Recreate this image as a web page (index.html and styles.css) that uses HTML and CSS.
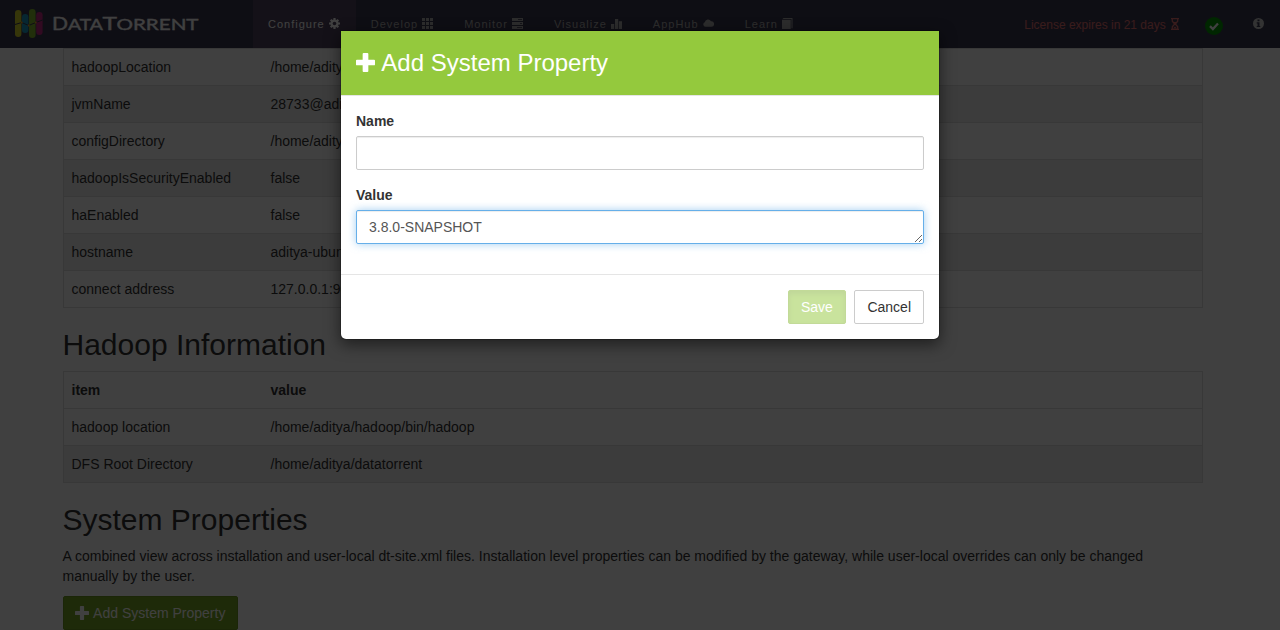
FILE: index.html
```
<!DOCTYPE html>
<html lang="en">
<head>
<meta charset="utf-8">
<title>DataTorrent - System Configuration</title>
<link rel="stylesheet" href="styles.css">
</head>
<body>
<header class="navbar">
  <svg class="logo" width="190" height="34" viewBox="0 0 190 34">
    <rect x="0" y="3" width="6.4" height="27" rx="3.2" fill="#d8d52a"/>
    <rect x="7" y="7" width="6.4" height="19" rx="3.2" fill="#1c9cc4"/>
    <rect x="14" y="2" width="6.6" height="29" rx="3.3" fill="#84ba2c"/>
    <rect x="21.2" y="5" width="6.4" height="23" rx="3.2" fill="#c32a83"/>
    <path d="M0 17.5 6.7 15.5 13.7 18.5 20.8 15.5 27.6 13" fill="none" stroke="#3b3850" stroke-width="1"/>
    <circle cx="6.7" cy="15.5" r="1" fill="#f0a020"/><circle cx="13.7" cy="18.5" r="1" fill="#f0a020"/><circle cx="20.8" cy="15.5" r="1" fill="#f0a020"/>
    <g class="wordmark">
      <text x="37" y="23" font-size="17.5" textLength="16" lengthAdjust="spacingAndGlyphs">D</text>
      <text x="53" y="23" font-size="14.5" textLength="35" lengthAdjust="spacingAndGlyphs">ATA</text>
      <text x="87.500" y="23" font-size="17.5" textLength="14.500" lengthAdjust="spacingAndGlyphs">T</text>
      <text x="101.500" y="23" font-size="14.5" textLength="82" lengthAdjust="spacingAndGlyphs">ORRENT</text>
    </g>
  </svg>
  <nav class="menu">
    <a class="item active">Configure <svg class="icon" viewBox="0 0 11 11"><g stroke="currentColor" stroke-width="2.2"><path d="M5.5 0V11M0 5.5H11M1.7 1.7 9.3 9.3M9.3 1.7 1.7 9.3"/></g><circle cx="5.5" cy="5.5" r="4" fill="currentColor"/><circle class="hole" cx="5.5" cy="5.5" r="1.8"/></svg></a>
    <a class="item">Develop <svg class="icon" viewBox="0 0 11 11"><path fill="currentColor" d="M0 0h3v3H0zM4 0h3v3H4zM8 0h3v3H8zM0 4h3v3H0zM4 4h3v3H4zM8 4h3v3H8zM0 8h3v3H0zM4 8h3v3H4zM8 8h3v3H8z"/></svg></a>
    <a class="item">Monitor <svg class="icon" viewBox="0 0 11 11"><path fill="currentColor" fill-rule="evenodd" d="M0 0h11v3H0zM6 1v.8h4V1zM0 4h11v3H0zM8 5v.8h2V5zM0 8h11v3H0zM5 9v.8h5V9z"/></svg></a>
    <a class="item">Visualize <svg class="icon" viewBox="0 0 11 11"><path fill="currentColor" d="M0 6h3.200v5H0zM4 1h3.200v10H4zM7.900 3.300H11V11H7.900z"/></svg></a>
    <a class="item">AppHub <svg class="icon" viewBox="0 0 11 11"><path fill="currentColor" d="M2.400 8.800A2.400 2.400 0 0 1 1.800 4.200 3.300 3.300 0 0 1 8 3.200 2.800 2.800 0 0 1 8.500 8.800z"/></svg></a>
    <a class="item">Learn <svg class="icon" viewBox="0 0 11 11"><path fill="currentColor" d="M1.500 0H10.500v10.200h-1V1H.5zM0 1.700h8.700V11H0z"/></svg></a>
  </nav>
  <div class="status">
    <span class="license">License expires in 21 days <svg width="8" height="12" viewBox="0 0 8 12"><path fill="none" stroke="currentColor" stroke-width="1.300" d="M0 .7h8M0 11.300h8M1.300 1v2.200L3.700 6 1.300 8.800V11M6.700 1v2.200L4.300 6l2.400 2.800V11"/><path fill="currentColor" d="M2 4h4L4 6zM2 10.500 4 8.500l2 2z"/></svg></span>
    <svg class="health" width="18" height="18" viewBox="0 0 18 18"><circle cx="9" cy="9" r="9" fill="#009600"/><path d="M5 9.200 7.900 12 13 6.500" fill="none" stroke="#fff" stroke-width="2.300"/></svg>
    <svg class="info" width="11" height="11" viewBox="0 0 11 11"><circle cx="5.500" cy="5.500" r="5.500" fill="currentColor"/><path fill="#3b3850" d="M4.500 1.500h2v1.700h-2zM3.700 4.200h2.800v3.700h.8v1.200H3.700V7.900h.8V5.400h-.8z"/></svg>
  </div>
</header>

<main class="container">
  <table class="props">
    <tr><td>hadoopLocation</td><td>/home/aditya</td></tr>
    <tr class="odd"><td>jvmName</td><td>28733@aditya</td></tr>
    <tr><td>configDirectory</td><td>/home/aditya</td></tr>
    <tr class="odd"><td>hadoopIsSecurityEnabled</td><td>false</td></tr>
    <tr><td>haEnabled</td><td>false</td></tr>
    <tr class="odd"><td>hostname</td><td>aditya-ubuntu</td></tr>
    <tr><td>connect address</td><td>127.0.0.1:9090</td></tr>
  </table>
  <h2>Hadoop Information</h2>
  <table class="props">
    <tr><th>item</th><th>value</th></tr>
    <tr><td>hadoop location</td><td>/home/aditya/hadoop/bin/hadoop</td></tr>
    <tr class="odd"><td>DFS Root Directory</td><td>/home/aditya/datatorrent</td></tr>
  </table>
  <h2>System Properties</h2>
  <p>A combined view across installation and user-local dt-site.xml files. Installation level properties can be modified by the gateway, while user-local overrides can only be changed manually by the user.</p>
  <button class="btn btn-success add"><svg class="plus" width="14" height="14" viewBox="0 0 20 20"><path d="M7 1q0-1 1-1h4q1 0 1 1v6h6q1 0 1 1v4q0 1-1 1h-6v6q0 1-1 1H8q-1 0-1-1v-6H1q-1 0-1-1V8q0-1 1-1h6z" fill="currentColor"/></svg> Add System Property</button>
</main>

<div class="backdrop"></div>
<div class="overlay">
  <section class="modal">
    <div class="modal-header"><h3><svg class="plus" width="19" height="19" viewBox="0 0 20 20"><path d="M7 1q0-1 1-1h4q1 0 1 1v6h6q1 0 1 1v4q0 1-1 1h-6v6q0 1-1 1H8q-1 0-1-1v-6H1q-1 0-1-1V8q0-1 1-1h6z" fill="currentColor"/></svg> Add System Property</h3></div>
    <div class="modal-body">
      <label for="name">Name</label>
      <input class="field" id="name" type="text">
      <label for="value">Value</label>
      <textarea class="field focused" id="value" rows="1">3.8.0-SNAPSHOT</textarea>
    </div>
    <div class="modal-footer">
      <button class="btn btn-success saving" disabled>Save</button>
      <button class="btn btn-default">Cancel</button>
    </div>
  </section>
</div>
</body>
</html>
```
FILE: styles.css
```
* { box-sizing: border-box; }
html, body { height: 100%; }
body {
  margin: 0;
  overflow: hidden;
  background: #fff;
  color: #333;
  font: 14px/20px "Liberation Sans", Arial, sans-serif;
}
.navbar {
  display: flex;
  height: 48px;
  padding-left: 15px;
  background: #3b3850;
  color: #b0b0b0;
}
.logo { flex: none; margin-top: 7px; }
.wordmark { fill: #fff; stroke: #fff; stroke-width: .35px; font-family: Lato, sans-serif; font-weight: 400; }
.menu { display: flex; margin-left: 48px; }
.item {
  padding: 14px 15px;
  font-size: 11px;
  letter-spacing: 1px;
  white-space: nowrap;
}
.item.active { background: #514660; color: #fff; }
.icon { width: 11px; height: 11px; margin-right: 1px; vertical-align: -1px; }
.hole { fill: #514660; }
.status { display: flex; flex: 1; justify-content: flex-end; padding-right: 16px; }
.license { margin: 15px 26px 0 0; font-size: 12px; color: #e27070; white-space: nowrap; }
.license svg { margin-left: 2px; vertical-align: -1px; }
.health { margin: 17px 30px 0 0; }
.info { margin-top: 18px; color: #ccc; }

.container { width: 1140px; margin-left: 62.5px; }
.props {
  width: 100%;
  table-layout: fixed;
  border: 1px solid #ddd;
  border-top: 0;
  border-spacing: 0;
}
.props td, .props th { padding: 8px; border-top: 1px solid #ddd; text-align: left; }
.props td:first-child, .props th:first-child { width: 199px; }
.odd { background: #f0f0f0; }
h2 { margin: 20px 0 10px; font-size: 30px; line-height: 33px; font-weight: 500; }
p { margin: 0 0 10px; }
.btn {
  height: 34px;
  padding: 6px 12px;
  border: 1px solid #ccc;
  border-radius: 2px;
  font: inherit;
  white-space: nowrap;
}
.btn-success { background: #78a824; border-color: #6c9820; color: #fff; }
.btn-default { background: #fff; color: #333; }
.plus { vertical-align: -2px; }
.add { padding-left: 11.5px; }
.add .plus { margin-right: 1px; }
.saving {
  padding: 6px 12.5px 6px 12px;
  background: #94c93d;
  border-color: #86b733;
  box-shadow: inset 0 3px 5px rgba(0, 0, 0, .125);
  opacity: .5;
}

.backdrop { position: absolute; inset: 0; background: rgba(0, 0, 0, .75); }
.overlay { position: absolute; inset: 0; }
.modal {
  width: 600px;
  margin: 30px auto;
  overflow: hidden;
  background: #fff;
  background-clip: padding-box;
  border: 1px solid rgba(0, 0, 0, .2);
  border-radius: 0 0 6px 6px;
  box-shadow: 0 5px 15px rgba(0, 0, 0, .5);
}
.modal-header {
  height: 65px;
  padding: 15px;
  background: #94c93d;
  border-bottom: 1px solid #e5e5e5;
  color: #fff;
}
h3 { margin: 0; font-size: 24px; line-height: 34px; font-weight: 500; }
h3 .plus { margin-right: 1px; vertical-align: -1px; }
.modal-body { padding: 15px 15px 30px; }
label { display: block; margin-bottom: 5px; font-weight: 700; }
.field {
  display: block;
  width: 100%;
  height: 34px;
  padding: 6px 12px;
  border: 1px solid #ccc;
  border-radius: 2px;
  background: #fff;
  box-shadow: inset 0 1px 1px rgba(0, 0, 0, .075);
  color: #555;
  font: inherit;
  outline: 0;
}
input.field { margin-bottom: 15px; }
textarea.field { overflow: hidden; }
.focused { border-color: #66afe9; box-shadow: inset 0 1px 1px rgba(0, 0, 0, .075), 0 0 8px rgba(102, 175, 233, .6); }
.modal-footer {
  display: flex;
  justify-content: flex-end;
  gap: 8px;
  padding: 15px;
  border-top: 1px solid #e5e5e5;
}
```
